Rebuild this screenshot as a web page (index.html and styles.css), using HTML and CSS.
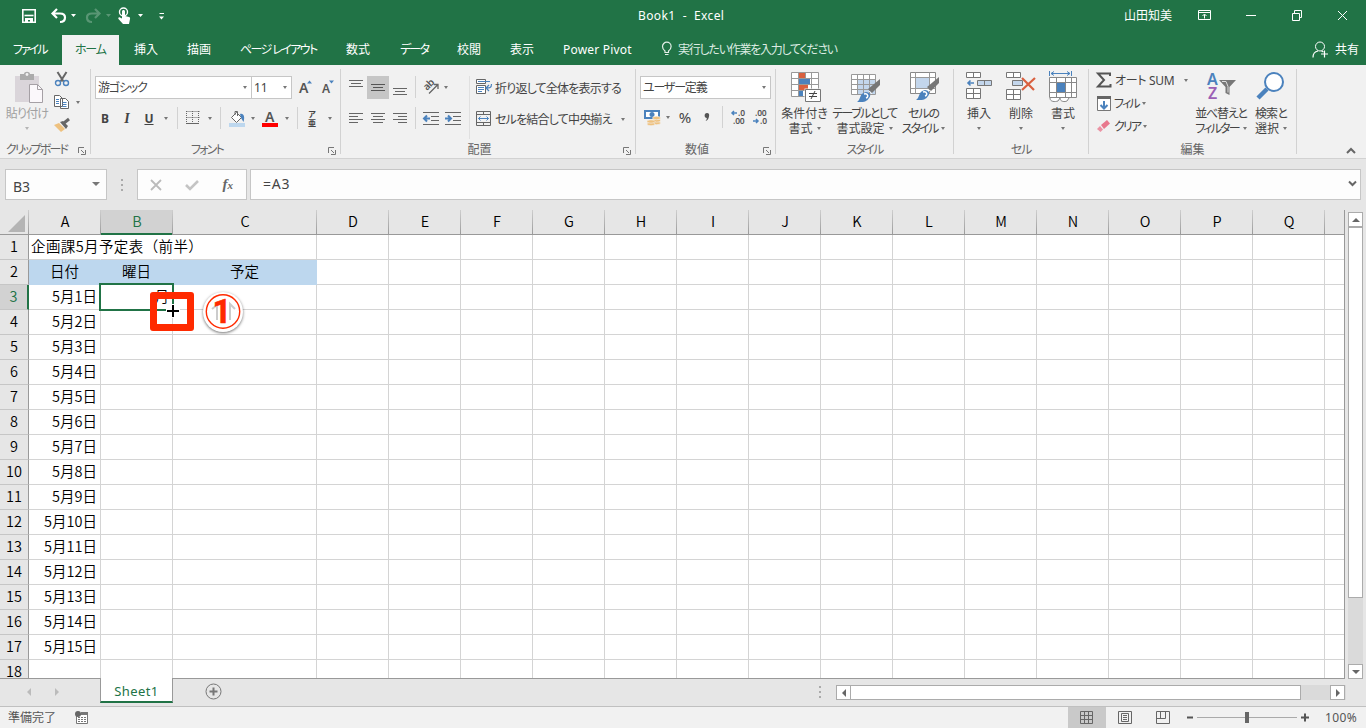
FILE: index.html
```html
<!DOCTYPE html>
<html lang="ja">
<head>
    <meta charset="UTF-8">
    <title>Book1 - Excel</title>
    <link rel="stylesheet" href="styles.css">
</head>
<body>
    <div class="app">
        <!-- Title bar -->
        <div class="titlebar">
            <div class="quick">
                <svg width="150" height="20" viewBox="0 0 150 20" fill="none">
                    <path d="M2.800 3.800h12.400v12.400H2.800z" stroke="#fff" stroke-width="1.600"/>
                    <path d="M4.500 9.500h9" stroke="#fff" stroke-width="1.600"/>
                    <path d="M5 12h8v4h-3v-2H8v2H5z" fill="#fff"/>
                    <path d="M33 7.500h7c4 0 5 2 5 4 0 3-2 4.500-5 4.500M37 3l-4.500 4.500L37 12" stroke="#fff" stroke-width="2.200"/>
                    <path d="M51 8h5l-2.500 3zM118 8h5l-2.500 3zM139 10.500h5l-2.500 3z" fill="#fff"/>
                    <path d="M139.500 7.500h4.500" stroke="#fff"/>
                    <g opacity=".25">
                        <path d="M79 7.500h-7c-4 0-5 2-5 4 0 3 2 4.500 5 4.500M75 3l4.500 4.500L75 12" stroke="#fff" stroke-width="2.200"/>
                        <path d="M86 8h5l-2.500 3z" fill="#fff"/>
                    </g>
                    <circle cx="103.500" cy="6" r="4" stroke="#fff" stroke-width="1.400"/>
                    <path d="M102 5.500c0-2 3-2 3 0V10l4 1c1 .3 1.300 1 1 2l-1 5h-6l-4.500-5c-.8-1 .5-2.200 1.500-1.500l2 1z" fill="#fff"/>
                </svg>
            </div>
            <div class="doc-title">Book1&nbsp; -&nbsp; Excel</div>
            <div class="user">山田知美</div>
            <svg class="window-icons" width="150" height="14" viewBox="0 0 150 14" fill="none" stroke="#fff">
                <path d="M.5 1.500h12v9H.500zM.5 3.500h12M6.500 9.500V5.500M4.500 7l2-2 2 2M48 6.500h10M94.500 4.500h7v7h-7zM96.500 4v-2.500h7v7h-2M140 2l9 9M149 2l-9 9"/>
            </svg>
        </div>

        <!-- Tabs -->
        <div class="tabs">
            <div class="tab file k4">ファイル</div>
            <div class="tab active k2">ホーム</div>
            <div class="tab insert">挿入</div>
            <div class="tab draw">描画</div>
            <div class="tab layout">ページ レイアウト</div>
            <div class="tab formula">数式</div>
            <div class="tab data k3">データ</div>
            <div class="tab review">校閲</div>
            <div class="tab view">表示</div>
            <div class="tab pivot">Power Pivot</div>
            <div class="tell">
                <svg width="12" height="16" viewBox="0 0 12 16" fill="none" stroke="#e4efe8"><path d="M4 11.500V10C2 8.500 1.500 7 1.500 5.500a4.300 4.300 0 0 1 8.600 0C10.100 7 9.500 8.500 7.500 10v1.500zM4 13.500h3.500" stroke-width="1.200"/></svg>
                <span>実行したい作業を入力してください</span>
            </div>
            <div class="share">
                <svg width="17" height="17" viewBox="0 0 17 17" fill="none" stroke="#fff"><circle cx="8" cy="5.500" r="4.500"/><path d="M1 16.500c0-4 2-6 5-6.500M9.500 10l2 1M12.500 9.500v7M9 13h7" stroke-width="1.200"/></svg>
                共有
            </div>
        </div>

        <!-- Ribbon -->
        <div class="ribbon">
            <div class="group clipboard">
                <div class="group-body">
                    <div class="big paste">
                        <svg width="30" height="32" viewBox="0 0 30 32"><path d="M1 4h24v26H1z" fill="#dad5da"/><path d="M6 2h4c0-3 6-3 6 0h4v6H6z" fill="#ababab"/><circle cx="13" cy="2.500" r="1.400" fill="#f1f1f1"/><path d="M15.500 12.500h8l5 5v13h-13z" fill="#fbf8fb" stroke="#a5a0a5"/><path d="M23.500 12.500v5h5" fill="none" stroke="#a5a0a5"/></svg>
                        <span class="k1">貼り付け</span>
                        <i class="caret"></i>
                    </div>
                    <div class="clip-tools">
                        <svg width="16" height="16" viewBox="0 0 16 16" fill="none"><path d="M3.500 1l6 9.500M12.500 1l-6 9.500" stroke="#666" stroke-width="2"/><circle cx="4" cy="12" r="2.500" stroke="#4b82bd" stroke-width="1.400"/><circle cx="12" cy="12" r="2.500" stroke="#4b82bd" stroke-width="1.400"/></svg>
                        <div class="copy">
                            <svg width="16" height="15" viewBox="0 0 16 15" fill="#fff" stroke="#666"><path d="M.5.500h5l3 3v8h-8zM6.500 3.500h5l3 3v7h-8z"/><path d="M2 4.500h3M2 6.500h3M2 8.500h3M8.500 7.500h4M8.500 9.500h4M8.500 11.500h4" stroke="#4b82bd"/></svg>
                            <i class="caret"></i>
                        </div>
                        <svg width="17" height="14" viewBox="0 0 17 14"><path d="M0 7l5-2 6 6-4 3z" fill="#eec17f"/><path d="M6 4l3-1 5 5-2 3z" fill="#666"/><path d="M10 5l5-4" stroke="#666" stroke-width="3"/></svg>
                    </div>
                </div>
                <div class="group-name k3">クリップボード</div>
                <svg class="launcher" width="8" height="8"><use href="#launch"/></svg>
            </div>

            <div class="group font">
                <div class="font-top">
                    <div class="combo name"><span class="k2">游ゴシック</span><i class="caret"></i></div>
                    <div class="combo size"><span>11</span><i class="caret"></i></div>
                    <svg width="14" height="16" viewBox="0 0 14 16"><text x="0" y="13" class="letter big-a">A</text><path d="M8 3.500l2.500-3 2.500 3z" fill="#4b82bd"/></svg>
                    <svg width="14" height="16" viewBox="0 0 14 16"><text x="0" y="13" class="letter small-a">A</text><path d="M7 .5h5l-2.500 3z" fill="#4b82bd"/></svg>
                </div>
                <div class="font-bottom">
                    <b>B</b><em>I</em><u>U</u><i class="caret"></i><i class="sep"></i>
                    <svg width="14" height="14" viewBox="0 0 14 14" fill="none" stroke="#666"><path d="M.5.500h13M.5 6.500h13M.5 0v13M6.500 0v13M12.500 0v13" stroke-dasharray="1 1"/><path d="M0 12.500h13"/></svg>
                    <i class="caret"></i><i class="sep"></i>
                    <svg width="17" height="17" viewBox="0 0 17 17"><path d="M2.500 7.500l5-5 5 5-5 5z" fill="#fff" stroke="#666"/><path d="M6 5V1.500h2.500V6" fill="none" stroke="#666"/><path d="M11 4c4-1 5 3 3.500 8L12 8z" fill="#4b82bd"/><path d="M0 13h16v4H0z" fill="#bdd7ee"/></svg>
                    <i class="caret"></i>
                    <svg width="16" height="17" viewBox="0 0 16 17"><text x="3" y="12" class="letter color-a">A</text><path d="M0 13h16v4H0z" fill="red"/></svg>
                    <i class="caret"></i><i class="sep"></i>
                    <span class="ruby"><span>ア</span><span>亜</span></span><i class="caret"></i>
                </div>
                <div class="group-name k3">フォント</div>
                <svg class="launcher" width="8" height="8"><use href="#launch"/></svg>
            </div>

            <div class="group align">
                <div class="align-body">
                    <div class="align-icons">
                        <svg class="high" width="14" height="7"><path d="M0 .5h14M2 3.500h10M0 6.500h14" stroke="#666"/></svg>
                        <span class="pressed"><svg width="14" height="7"><path d="M0 .5h14M2 3.500h10M0 6.500h14" stroke="#555"/></svg></span>
                        <svg class="low" width="14" height="7"><path d="M0 .5h14M2 3.500h10M0 6.500h14" stroke="#666"/></svg>
                        <i class="sep"></i>
                        <svg width="18" height="18" viewBox="0 0 18 18"><text transform="translate(5 13) rotate(-45)" class="letter ab">ab</text><path d="M7 15.500l9-9M12 6.500h4V11" fill="none" stroke="#666" stroke-width="1.300"/></svg>
                        <i class="caret"></i>
                    </div>
                    <div class="align-icons lower">
                        <svg width="14" height="10"><path d="M0 .5h14M0 3.500h9M0 6.500h14M0 9.500h9" stroke="#666"/></svg>
                        <svg width="14" height="10"><path d="M0 .5h14M2 3.500h10M0 6.500h14M2 9.500h10" stroke="#666"/></svg>
                        <svg width="14" height="10"><path d="M0 .5h14M5 3.500h9M0 6.500h14M5 9.500h9" stroke="#666"/></svg>
                        <i class="sep"></i>
                        <svg width="16" height="13"><path d="M0 .5h16M8 4.500h8M8 8.500h8M0 12.500h16" stroke="#666"/><path d="M7 6.500H1M4 3.500l-3 3 3 3" fill="none" stroke="#4b82bd" stroke-width="2"/></svg>
                        <svg width="16" height="13"><path d="M0 .5h16M8 4.500h8M8 8.500h8M0 12.500h16" stroke="#666"/><path d="M0 6.500h6M3 3.500l3 3-3 3" fill="none" stroke="#4b82bd" stroke-width="2"/></svg>
                    </div>
                </div>
                <div class="wrap-tools">
                    <div class="tool">
                        <svg width="16" height="16" viewBox="0 0 16 16" fill="#fff" stroke="#666"><path d="M.5.500h9v4h-9zM.5 6.500h9v8h-9z"/><path d="M2 2.500h12M2 8.500h6M2 10.500h6M2 12.500h4M15.500 5c0 4-2 4-5 4M13 6l-3 3 3 3" fill="none" stroke="#4b82bd" stroke-width="1.200"/></svg>
                        <span class="k1">折り返して全体を表示する</span>
                    </div>
                    <div class="tool">
                        <svg width="16" height="15" viewBox="0 0 16 15" fill="none" stroke="#666"><path d="M.5.500h14v14H.500zM.5 3.500h14M.5 11.500h14M7.500 0v3.500M7.500 11.500v3"/><path d="M2.500 7.500h10M4.500 5.500l-2 2 2 2M10.500 5.500l2 2-2 2" stroke="#4b82bd"/></svg>
                        <span class="k1 merge-text">セルを結合して中央揃え</span><i class="caret"></i>
                    </div>
                </div>
                <div class="group-name">配置</div>
                <svg class="launcher" width="8" height="8"><use href="#launch"/></svg>
            </div>

            <div class="group number">
                <div class="combo format"><span class="k2">ユーザー定義</span><i class="caret"></i></div>
                <div class="number-row">
                    <svg width="17" height="17" viewBox="0 0 17 17"><path d="M0 1h16v9H0z" fill="#4b82bd"/><path d="M2 3h12v5H2z" fill="#fff"/><circle cx="8" cy="5.500" r="2.500" fill="#4b82bd"/><g fill="#eec17f" stroke="#f1f1f1" stroke-width=".6"><ellipse cx="12.500" cy="14" rx="4" ry="1.700"/><ellipse cx="12.500" cy="11.500" rx="4" ry="1.700"/><ellipse cx="12.500" cy="9" rx="4" ry="1.700"/><ellipse cx="7" cy="15" rx="4" ry="1.700"/><ellipse cx="7" cy="12.500" rx="4" ry="1.700"/></g></svg>
                    <i class="caret"></i><span class="percent">%</span>
                    <svg width="6" height="9" viewBox="0 0 6 9"><path d="M3 0c2 0 2.500 1.500 2 3.500C4.500 6 3.500 7.500 1.500 8c1-1.200 1.300-2 1.300-3C0 5-.2 0 3 0z" fill="#555"/></svg>
                    <i class="sep"></i>
                    <svg width="16" height="16" viewBox="0 0 16 16"><text x="8" y="7" class="letter dec">.0</text><text x="3" y="15" class="letter dec">.00</text><path d="M7 4H2M4 2L2 4l2 2" fill="none" stroke="#4b82bd" stroke-width="1.500"/></svg>
                    <svg width="16" height="16" viewBox="0 0 16 16"><text x="3" y="7" class="letter dec">.00</text><text x="8" y="15" class="letter dec">.0</text><path d="M1 12h5M4 10l2 2-2 2" fill="none" stroke="#4b82bd" stroke-width="1.500"/></svg>
                </div>
                <div class="group-name">数値</div>
                <svg class="launcher" width="8" height="8"><use href="#launch"/></svg>
            </div>

            <div class="group styles">
                <div class="group-body">
                    <div class="big cond">
                        <svg width="32" height="32" viewBox="0 0 32 32"><path d="M2.500 1.500h27v24h-27z" fill="#fff"/><path d="M2.500 1.500h27v24h-27zM9.500 1.500v24M16.500 1.500v24M22.500 1.500v24M2.500 7.500h27M2.500 13.500h27M2.500 19.500h27" fill="none" stroke="#999"/><path d="M10 2h6v5h-6zM10 14h9v5h-9z" fill="#d9603f"/><path d="M10 8h11v5H10zM10 20h4v5h-4z" fill="#4b82bd"/><path d="M15.500 17.500h17v14h-17z" fill="#f1f1f1"/><path d="M16.500 18.500h15v12h-15z" fill="#fff" stroke="#777"/><path d="M20 22.500h8M20 25.500h8M26 20l-4 8" stroke="#444" fill="none"/></svg>
                        <span>条件付き</span><span>書式<i class="caret"></i></span>
                    </div>
                    <div class="big table">
                        <svg width="32" height="32" viewBox="0 0 32 32"><path d="M2.500 3.500h24v20h-24z" fill="#fff"/><path d="M9 9h17v14H9z" fill="#c3d6ec"/><path d="M2.500 3.500h24v20h-24zM8.500 3.500v20M14.500 3.500v20M20.500 3.500v20M2.500 8.500h24M2.500 13.500h24M2.500 18.500h24" fill="none" stroke="#999"/><use href="#brush"/></svg>
                        <span class="table-label">テーブルとして</span><span>書式設定<i class="caret"></i></span>
                    </div>
                    <div class="big cellst">
                        <svg width="32" height="32" viewBox="0 0 32 32"><path d="M2.500 1.500h25v21h-25z" fill="#fff" stroke="#888"/><path d="M8 7h13v10H8z" fill="#c3d6ec"/><path d="M2.500 6.500h25M2.500 17.500h25M7.500 1.500v21M21.500 1.500v21" stroke="#999"/><use href="#brush" y="-2"/></svg>
                        <span class="k2">セルの</span><span class="k3">スタイル<i class="caret"></i></span>
                    </div>
                </div>
                <div class="group-name k3">スタイル</div>
            </div>

            <div class="group cells">
                <div class="group-body">
                    <div class="big">
                        <svg width="30" height="32" viewBox="0 0 30 32" fill="#fff" stroke="#777"><path d="M2.500 1.500h14v5h-14zM9.500 1.500v5M2.500 17.500h14v10h-14zM9.500 17.500v10M2.500 22.500h14"/><path d="M13.500 9.500h14v5h-14zM20.500 9.500v5" fill="#c3d6ec"/><path d="M10 12H4M6.500 9.500L4 12l2.500 2.500" fill="none" stroke="#4b82bd" stroke-width="1.600"/></svg>
                        <span>挿入</span><i class="caret"></i>
                    </div>
                    <div class="big">
                        <svg width="30" height="32" viewBox="0 0 30 32" fill="#fff" stroke="#777"><path d="M.5 1.500h14v5H.500zM7.500 1.500v5M.5 18.500h14v10H.500zM7.500 18.500v10M.5 23.500h14"/><path d="M6.500 9.500h10v5h-10z" fill="#c3d6ec"/><path d="M16 7l12 12M29 7L16 19" stroke="#d9603f" stroke-width="2.200"/></svg>
                        <span>削除</span><i class="caret"></i>
                    </div>
                    <div class="big">
                        <svg width="30" height="32" viewBox="0 0 30 32" fill="#fff" stroke="#888"><path d="M2 27c0 4 5 4 8 3l2-3c0 4 5 4 7 3l2-3"/><path d="M1.500 6.500h27v20h-27zM1.500 11.500h27M1.500 21.500h27"/><path d="M8.500 6.500v20M17.500 6.500v20M23.500 6.500v20"/><path d="M9 12h8v9H9z" fill="#4b82bd" stroke="none"/><path d="M1.500 0v5M23.500 0v5M3 2.500h19M6 .5l-3 2 3 2M19 .5l3 2-3 2" fill="none" stroke="#4b82bd"/></svg>
                        <span>書式</span><i class="caret"></i>
                    </div>
                </div>
                <div class="group-name k2">セル</div>
            </div>

            <div class="group edit">
                <div class="group-body">
                    <div class="edit-list">
                        <div class="tool"><svg width="16" height="16" viewBox="0 0 16 16"><path d="M14 4V1.500H2L8 8l-6 6.500h12.500V12" fill="none" stroke="#555" stroke-width="2"/></svg><span class="sum">オート SUM</span><i class="caret"></i></div>
                        <div class="tool"><svg width="15" height="16" viewBox="0 0 15 16"><path d="M1.500.500h13v14h-13z" fill="#fff" stroke="#777"/><path d="M1 0h14v3H1z" fill="#666"/><path d="M8 5v8M4.500 9L8 12.500 11.500 9" fill="none" stroke="#4b82bd" stroke-width="2"/></svg><span class="k3">フィル</span><i class="caret"></i></div>
                        <div class="tool"><svg width="15" height="14" viewBox="0 0 15 14"><path d="M5 5l6-5 3 3.500L8 9z" fill="#e8788d"/><path d="M1 9l3-3 3 3.500L4.500 12z" fill="#eb93a4"/></svg><span class="k3">クリア</span><i class="caret"></i></div>
                    </div>
                    <div class="big sort">
                        <svg width="32" height="32" viewBox="0 0 32 32"><text x="2" y="14" class="az a">A</text><text x="3" y="28" class="az z">Z</text><path d="M14 9h17l-6.500 7v8l-4-2v-6z" fill="#777"/><path d="M17 10.500h4l2 5v6" fill="none" stroke="#ddd"/></svg>
                        <span class="k2">並べ替えと</span><span class="k3">フィルター<i class="caret"></i></span>
                    </div>
                    <div class="big find">
                        <svg width="30" height="32" viewBox="0 0 30 32"><path d="M11 18l-9 9" stroke="#4b82bd" stroke-width="4.500"/><circle cx="18" cy="11" r="9" fill="#fff" stroke="#4b82bd" stroke-width="2"/></svg>
                        <span class="k1">検索と</span><span>選択<i class="caret"></i></span>
                    </div>
                </div>
                <div class="group-name">編集</div>
            </div>
            <svg class="collapse" width="10" height="7"><path d="M1 6l4-4 4 4" fill="none" stroke="#666" stroke-width="2"/></svg>
        </div>

        <!-- Formula bar -->
        <div class="formula-bar">
            <div class="name-box"><span>B3</span><i class="caret wide"></i></div>
            <div class="dots"><i></i><i></i><i></i></div>
            <div class="fx-box">
                <svg width="12" height="12"><path d="M1 1l10 10M11 1L1 11" stroke="#bbb" stroke-width="1.800"/></svg>
                <svg width="14" height="12"><path d="M1 6l4 4 8-8" fill="none" stroke="#c4c4c4" stroke-width="2.600"/></svg>
                <span class="fx">f<small>x</small></span>
            </div>
            <div class="formula-input"><span>=A3</span><svg width="9" height="7"><path d="M1 1.500l3.500 3.500L8 1.500" fill="none" stroke="#666" stroke-width="2"/></svg></div>
        </div>

        <!-- Sheet -->
        <div class="workspace">
            <div class="sheet">
                <div class="cols">
                    <div class="corner"><svg width="17" height="17"><path d="M17 0v17H0z" fill="#b4b4b4"/></svg></div>
                    <div>A</div><div class="sel">B</div><div class="wide">C</div><div>D</div><div>E</div><div>F</div><div>G</div><div>H</div><div>I</div><div>J</div><div>K</div><div>L</div><div>M</div><div>N</div><div>O</div><div>P</div><div>Q</div>
                </div>
                <div class="row first"><div class="rh">1</div><div class="title">企画課5月予定表（前半）</div><div></div><div class="c"></div><div class="rest"></div></div>
                <div class="row head"><div class="rh">2</div><div>日付</div><div>曜日</div><div class="c">予定</div><div class="rest"></div></div>
                <div class="row"><div class="rh sel">3</div><div>5月1日</div><div>月</div><div class="c"></div><div class="rest"></div></div>
                <div class="row"><div class="rh">4</div><div>5月2日</div><div></div><div class="c"></div><div class="rest"></div></div>
                <div class="row"><div class="rh">5</div><div>5月3日</div><div></div><div class="c"></div><div class="rest"></div></div>
                <div class="row"><div class="rh">6</div><div>5月4日</div><div></div><div class="c"></div><div class="rest"></div></div>
                <div class="row"><div class="rh">7</div><div>5月5日</div><div></div><div class="c"></div><div class="rest"></div></div>
                <div class="row"><div class="rh">8</div><div>5月6日</div><div></div><div class="c"></div><div class="rest"></div></div>
                <div class="row"><div class="rh">9</div><div>5月7日</div><div></div><div class="c"></div><div class="rest"></div></div>
                <div class="row"><div class="rh">10</div><div>5月8日</div><div></div><div class="c"></div><div class="rest"></div></div>
                <div class="row"><div class="rh">11</div><div>5月9日</div><div></div><div class="c"></div><div class="rest"></div></div>
                <div class="row"><div class="rh">12</div><div>5月10日</div><div></div><div class="c"></div><div class="rest"></div></div>
                <div class="row"><div class="rh">13</div><div>5月11日</div><div></div><div class="c"></div><div class="rest"></div></div>
                <div class="row"><div class="rh">14</div><div>5月12日</div><div></div><div class="c"></div><div class="rest"></div></div>
                <div class="row"><div class="rh">15</div><div>5月13日</div><div></div><div class="c"></div><div class="rest"></div></div>
                <div class="row"><div class="rh">16</div><div>5月14日</div><div></div><div class="c"></div><div class="rest"></div></div>
                <div class="row"><div class="rh">17</div><div>5月15日</div><div></div><div class="c"></div><div class="rest"></div></div>
                <div class="row"><div class="rh">18</div><div></div><div></div><div class="c"></div><div class="rest"></div></div>
            </div>
            <div class="vscroll">
                <div class="btn"><i class="up"></i></div>
                <div class="thumb"></div>
                <div class="btn"><i class="down"></i></div>
            </div>
        </div>

        <!-- Sheet tabs -->
        <div class="sheet-tabs">
            <div class="nav"><i class="left"></i><i class="right"></i></div>
            <div class="sheet-tab">Sheet1</div>
            <svg class="add" width="17" height="17" fill="none" stroke="#777"><circle cx="8.500" cy="8.500" r="7.500"/><path d="M8.500 4.500v8M4.500 8.500h8" stroke-width="2"/></svg>
            <div class="dots"><i></i><i></i><i></i></div>
            <div class="hscroll">
                <div class="btn"><i class="left"></i></div>
                <div class="thumb"></div>
                <div class="btn"><i class="right"></i></div>
            </div>
        </div>

        <!-- Status bar -->
        <div class="status">
            <span class="ready">準備完了</span>
            <svg class="macro" width="13" height="13"><path d="M1.500 3.500h11v9h-11z" fill="#fff" stroke="#777"/><path d="M6 1h7v3H6z" fill="#777"/><path d="M3 6.500h9M3 8.500h9M3 10.500h9" stroke="#777" stroke-dasharray="2 1"/><circle cx="3" cy="3" r="3" fill="#666"/></svg>
            <div class="view on"><svg width="14" height="13" fill="none" stroke="#666"><path d="M.5.500h12v12H.500zM4.500 0v13M8.500 0v13M0 4.500h13M0 8.500h13"/></svg></div>
            <div class="view"><svg width="14" height="13" fill="none" stroke="#666"><path d="M.5.500h13v12H.500zM3.500 2.500h7v8h-7zM5 4.500h4M5 6.500h4M5 8.500h4"/></svg></div>
            <div class="view"><svg width="14" height="13" fill="none" stroke="#666"><path d="M.5.500h13v12H.500zM4.500 0v7.500M0 7.500h9.500V0"/></svg></div>
            <svg class="zoom" width="122" height="13"><path d="M0 6.500h6M114 6.500h8M118 2.500v8" stroke="#555" stroke-width="2"/><path d="M10 6.500h100" stroke="#aaa"/><path d="M58 1h4v11h-4z" fill="#666"/></svg>
            <span class="percent-label">100%</span>
        </div>

        <!-- Selection and step marker -->
        <div class="selection"></div>
        <div class="marker-box"></div>
        <svg class="cursor" width="16" height="16"><path d="M8 1v14M1 8h14" stroke="#fff" stroke-width="4"/><path d="M8 2v12M2 8h12" stroke="#000" stroke-width="2"/></svg>
        <div class="step">
            <svg width="40" height="40" viewBox="0 0 40 40" fill="none">
                <path d="M9 17l5-4v15M32 17l-5-5v16" stroke="#ccc" stroke-width="2"/>
                <circle cx="20" cy="19.500" r="16.700" stroke="#ff2a00" stroke-width="1.400"/>
                <text x="19" y="31" text-anchor="middle">1</text>
            </svg>
        </div>
    </div>

    <svg width="0" height="0" class="defs">
        <defs>
            <g id="launch"><path d="M.5 6V.500H6M3 3l3 3M7.500 3v4.500H3" fill="none" stroke="#777"/></g>
            <g id="brush"><path d="M31 8v6l-8 8-4-4z" fill="#777"/><path d="M20 20l3 3" stroke="#f1f1f1"/><path d="M17 21c3 0 6 3 3 6-3 5-8 4-12 4 4-2 2-9 9-10z" fill="#4b82bd"/><path d="M15 23c4-1 5 3 2 4" fill="none" stroke="#fff" stroke-width="1.500"/></g>
        </defs>
    </svg>
</body>
</html>
```
FILE: styles.css
```css
* {
    margin: 0;
    padding: 0;
    box-sizing: border-box;
}

body {
    font-family: "Noto Sans", "Noto Sans CJK JP", sans-serif;
    font-size: 12px;
    line-height: 15px;
    color: #444;
    background: #e6e6e6;
    overflow: hidden;
}

svg {
    display: block;
    flex-shrink: 0;
    overflow: visible;
}

.app {
    position: relative;
    display: flex;
    flex-direction: column;
    width: 1366px;
    height: 728px;
    white-space: nowrap;
    font-feature-settings: "palt";
}

.defs { position: absolute; }

/* kana spacing, narrow to narrower */
.k1 { letter-spacing: -0.8px; }
.k2 { letter-spacing: -1.2px; }
.k3 { letter-spacing: -1.8px; }
.k4 { letter-spacing: -2px; }

.caret {
    display: inline-block;
    width: 0;
    border: 2.5px solid transparent;
    border-top: 3px solid #777;
    border-bottom: 0;
}

.caret.wide {
    border-width: 4px 4px 0;
}

.sep {
    width: 1px;
    height: 22px;
    background: #d2d2d2;
}

/* title bar */
.titlebar {
    display: flex;
    align-items: center;
    height: 35px;
    padding: 0 17px 4px 20px;
    background: #217346;
    color: #fff;
}

.quick { width: 618px; }
.doc-title { width: 486px; letter-spacing: .4px; }
.user { width: 74px; }

/* tabs */
.tabs {
    display: flex;
    align-items: center;
    height: 30px;
    background: #217346;
    color: #fff;
}

.tab {
    display: flex;
    align-items: center;
    height: 30px;
    padding: 0 0 2px 13px;
}

.tab.file { width: 62px; }
.tab.active { width: 57px; background: #f1f1f1; color: #217346; }
.tab.insert { width: 54px; padding-left: 15px; }
.tab.draw { width: 54px; padding-left: 14px; }
.tab.layout { width: 106px; letter-spacing: -1.6px; }
.tab.formula { width: 54px; }
.tab.data { width: 57px; }
.tab.review { width: 45px; }
.tab.view { width: 54px; padding-left: 12px; }
.tab.pivot { width: 118px; padding-left: 20px; letter-spacing: .2px; }

.tell {
    display: flex;
    align-items: center;
    gap: 5px;
    width: 651px;
    padding-bottom: 2px;
    color: #dcebe2;
    letter-spacing: -1.25px;
}

.share {
    display: flex;
    align-items: center;
    gap: 6px;
    padding-bottom: 2px;
}

/* ribbon */
.ribbon {
    display: flex;
    height: 94px;
    padding-top: 4px;
    background: #f1f1f1;
    border-bottom: 1px solid #d2d2d2;
    flex-shrink: 0;
}

.group {
    position: relative;
    height: 85px;
    border-right: 1px solid #d2d2d2;
    padding-bottom: 14px;
}

.group.clipboard { width: 91px; }
.group.font { width: 250px; }
.group.align { width: 295px; display: flex; }
.group.number { width: 140px; }
.group.styles { width: 178px; }
.group.cells { width: 135px; }
.group.edit { width: 208px; }

.group-body { display: flex; height: 71px; }

.group-name {
    position: absolute;
    left: 0;
    right: 17px;
    bottom: -3px;
    text-align: center;
    color: #666;
}

.styles .group-name,
.cells .group-name,
.edit .group-name { right: 0; }

.launcher {
    position: absolute;
    right: 4px;
    bottom: -1px;
}

.big {
    display: flex;
    flex-direction: column;
    align-items: center;
    padding-top: 2px;
}

.big svg { margin-bottom: 3px; }
.big span .caret { margin: 0 0 3px 4px; }
.big > .caret { margin-top: 6px; }

.paste { width: 54px; padding-top: 3px; color: #a0a0a0; }
.paste svg { margin: 0 0 2px 3px; }
.paste .caret { border-top-color: #b5b5b5; }

.clip-tools {
    display: flex;
    flex-direction: column;
    gap: 8px;
    padding-top: 2px;
}

.copy { display: flex; align-items: center; gap: 6px; }

.combo {
    display: flex;
    align-items: center;
    justify-content: space-between;
    height: 23px;
    padding: 0 4px 0 2px;
    background: #fff;
    border: 1px solid #c6c6c6;
}

.font-top {
    display: flex;
    align-items: center;
    padding: 7px 0 0 4px;
}

.combo.name { width: 157px; }
.combo.size { width: 40px; margin-right: 7px; border-left: 0; }
.font-top svg + svg { margin-left: 9px; }

.letter { font-family: "Noto Sans"; font-weight: 600; fill: #555; }
.big-a { font-size: 14px; }
.small-a { font-size: 12px; }
.color-a { font-size: 14px; }
.ab { font-size: 10px; letter-spacing: -.5px; }
.dec { font-size: 8.5px; letter-spacing: -.2px; }

.font-bottom {
    display: grid;
    grid-template-columns: 22px 22px 22px 12px 10px 22px 11px 11px 22px 10px 24px 9px 13px 16px 19px;
    align-items: center;
    justify-items: center;
    height: 32px;
    margin-top: 3px;
    padding-left: 3px;
}

.font-bottom em { font-family: "Liberation Serif"; font-size: 14px; font-weight: bold; }
.font-bottom u { font-weight: bold; }

.ruby {
    display: flex;
    flex-direction: column;
    align-items: center;
    font-family: "Noto Sans CJK JP", sans-serif;
    font-size: 8px;
    line-height: 9px;
    font-weight: bold;
}

.align-body { width: 128px; }

.align-icons {
    display: grid;
    grid-template-columns: 22px 22px 22px 9px 22px 8px;
    align-items: center;
    justify-items: center;
    height: 36px;
    padding-left: 4px;
}

.align-icons.lower {
    grid-template-columns: 22px 22px 22px 9px 22px 22px;
    height: 26px;
}

.pressed { display: flex; align-items: center; justify-content: center; width: 22px; height: 23px; background: #c6c6c6; }
.high { margin-bottom: 7px; }
.low { margin-top: 9px; }

.wrap-tools {
    display: flex;
    flex-direction: column;
    gap: 15px;
    height: 63px;
    margin-top: 7px;
    padding: 4px 0 0 6px;
    border-left: 1px solid #e0e0e0;
}

.tool { display: flex; align-items: center; height: 16px; }
.wrap-tools .tool svg { margin: -2px 3px 0 0; }
.merge-text { width: 126px; }

.number .format { width: 131px; margin: 7px 0 0 4px; }

.number-row {
    display: grid;
    grid-template-columns: 24px 7px 28px 16px 15px 16px 28px;
    align-items: center;
    justify-items: center;
    height: 36px;
    padding-left: 4px;
}

.percent { font-size: 15px; }

.cond { width: 57px; }
.table { width: 63px; }
.table-label { letter-spacing: -1.5px; }
.cellst { width: 55px; }
.cells .big { width: 42px; }
.cells .group-body { padding-left: 4px; }

.edit-list { width: 99px; padding: 1px 0 0 7px; }
.edit-list .tool { height: 23px; }
.edit-list .tool:first-child { height: 20px; margin-bottom: 2px; }
.edit-list span { margin: 0 3px; }
.edit-list .sum { width: 65px; margin-right: 4px; letter-spacing: -.3px; }
.sort { width: 66px; }
.find { width: 34px; }
.az { font-family: "Noto Sans"; font-weight: 600; font-size: 16px; }
.az.a { fill: #4b82bd; }
.az.z { fill: #9b5fb5; }

.collapse { align-self: flex-end; margin: 0 0 4px 49px; }

/* formula bar */
.formula-bar {
    display: flex;
    align-items: center;
    height: 51px;
    padding-left: 5px;
    font-size: 14px;
}

.name-box,
.fx-box,
.formula-input {
    display: flex;
    align-items: center;
    justify-content: space-between;
    height: 31px;
    background: #fdfdfd;
    border: 1px solid #c6c6c6;
}

.name-box { width: 102px; padding: 4px 6px 0 7px; }
.name-box .caret { margin-bottom: 5px; }
.fx-box { width: 110px; padding: 0 13px 0 12px; }
.formula-input { width: 1111px; margin-left: 3px; padding: 0 3px 2px 12px; letter-spacing: .8px; }

.dots {
    display: flex;
    flex-direction: column;
    align-items: center;
    gap: 3px;
    width: 30px;
}

.dots i { width: 2px; height: 2px; background: #aaa; }

.fx { font: italic bold 15px "Liberation Serif"; color: #666; }
.fx small { font-size: 11px; }

/* sheet */
.workspace { display: flex; height: 468px; }

.sheet {
    width: 1345px;
    height: 469px;
    overflow: hidden;
    background: #fff;
    border-right: 1px solid #999;
    border-bottom: 1px solid #999;
    font-family: "Noto Sans CJK JP", sans-serif;
    font-size: 14.5px;
    font-weight: 350;
    line-height: 22px;
    color: #000;
    font-feature-settings: normal;
}

.cols {
    display: flex;
    height: 25px;
    background: #e6e6e6;
    border-bottom: 1px solid #999;
    margin-right: -1px;
    border-right: 1px solid #e6e6e6;
}

.cols div {
    width: 72px;
    height: 24px;
    padding-left: 1px;
    text-align: center;
    border-right: 1px solid;
    border-image: linear-gradient(#d0d0d0, #999) 1;
}

.cols .wide { width: 144px; }
.cols .corner { width: 29px; padding: 5px 0 0 8px; }
.cols .sel { height: 25px; background: linear-gradient(#217346, #217346) bottom / 100% 2px no-repeat #d2d2d2; color: #217346; }

.row { display: flex; height: 25px; }

.row > div {
    width: 72px;
    padding-right: 3px;
    text-align: right;
    border-right: 1px solid #d4d4d4;
    border-bottom: 1px solid #d4d4d4;
}

.row > .c { width: 144px; }

.row > .rh {
    width: 29px;
    padding: 0;
    text-align: center;
    background: #e6e6e6;
    border-right-color: #999;
    border-bottom-color: #c6c6c6;
}

.row > .rh.sel { background: #d2d2d2; color: #217346; border-right: 2px solid #217346; }

.row > .rest {
    width: 1027px;
    border-right: 0;
    background: repeating-linear-gradient(to right, transparent 0 71px, #d4d4d4 71px 72px);
}

.row > .title { padding: 0 0 0 2px; text-align: left; letter-spacing: .4px; border-right-color: transparent; }
.first .title + div { border-right-color: transparent; }
.head > div:not(.rh):not(.rest) { background: #bdd7ee; border-color: #bdd7ee; text-align: center; padding: 0; }

.vscroll {
    display: flex;
    flex-direction: column;
    width: 15px;
    height: 467px;
    margin: 2px 0 0 3px;
    background: #dadada;
}

.btn,
.thumb { background: #fff; border: 1px solid #ababab; }
.btn { display: flex; align-items: center; justify-content: center; width: 15px; height: 15px; }
.vscroll .thumb { height: 371px; margin-bottom: 66px; }

.up, .down, .left, .right { width: 0; border: 4px solid transparent; }
.up { border-top: 0; border-bottom-color: #666; }
.down { border-bottom: 0; border-top-color: #666; }
.left { border-left: 0; border-right-color: #666; }
.right { border-right: 0; border-left-color: #666; }

/* sheet tabs */
.sheet-tabs {
    display: flex;
    height: 29px;
    border-bottom: 1px solid #c0c0c0;
    padding-bottom: 1px;
}

.nav { display: flex; align-items: center; gap: 24px; width: 100px; padding-left: 27px; }
.nav .left { border-right-color: #bbb; }
.nav .right { border-left-color: #bbb; }

.sheet-tab {
    position: relative;
    width: 73px;
    height: 25px;
    padding-top: 6px;
    text-align: center;
    font-size: 13px;
    letter-spacing: .4px;
    color: #217346;
    background: #fff;
    border: 1px solid #999;
    border-top: 0;
    border-bottom: 2px solid #217346;
}

.add { margin: 5px 0 0 32px; }
.sheet-tabs .dots { width: 12px; margin: 0 10px 0 592px; justify-content: center; }
.hscroll { display: flex; width: 510px; height: 15px; margin-top: 7px; background: #dadada; }
.hscroll .thumb { width: 451px; margin: 0 29px 0 -1px; }
.hscroll .btn { flex-shrink: 0; }

/* status bar */
.status {
    display: flex;
    align-items: center;
    height: 21px;
    padding-left: 8px;
    background: #f1f1f1;
    color: #555;
}

.ready { width: 67px; }
.macro { margin-right: 980px; }
.view { display: flex; align-items: center; justify-content: center; width: 38px; height: 21px; }
.view.on { background: #c9c9c9; }
.zoom { margin: 0 16px 0 5px; }
.percent-label { letter-spacing: .4px; }

/* selection and marker */
.selection {
    position: absolute;
    left: 99px;
    top: 283px;
    width: 75px;
    height: 28px;
    border: 2px solid #217346;
}

.marker-box {
    position: absolute;
    left: 150px;
    top: 292px;
    width: 44px;
    height: 39px;
    border: 7px solid #ff2a00;
    border-radius: 3px;
}

.cursor { position: absolute; left: 165px; top: 303px; }

.step {
    position: absolute;
    left: 203px;
    top: 292px;
    width: 40px;
    height: 40px;
    border-radius: 50%;
    background: #fff;
    box-shadow: 0 1px 3px rgba(0, 0, 0, 0.55);
}

.step text {
    font: bold 33px Roboto, sans-serif;
    fill: #ff2a00;
    stroke: #ff2a00;
    stroke-width: .6px;
}
```
